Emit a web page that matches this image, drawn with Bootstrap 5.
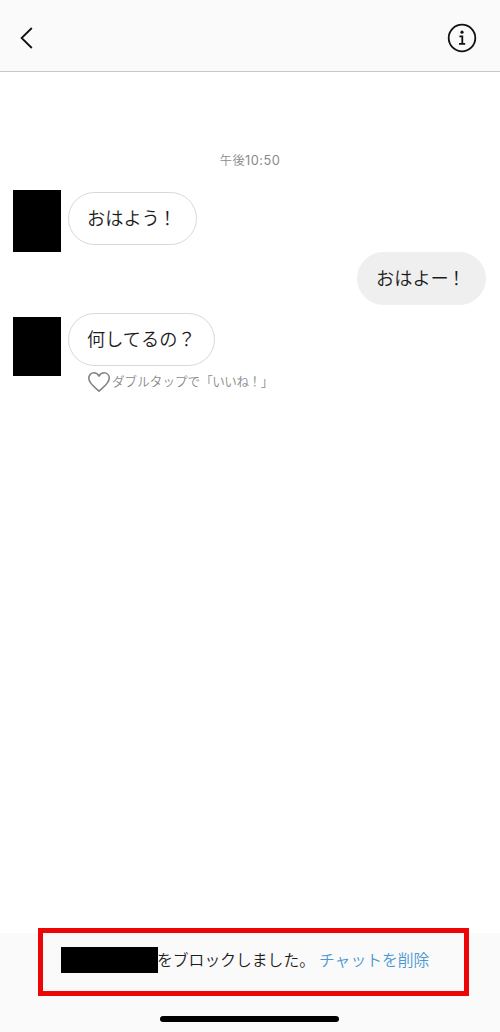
<!DOCTYPE html>
<html lang="ja">
<head>
<meta charset="utf-8">
<meta name="viewport" content="width=device-width, initial-scale=1">
<title>チャット</title>
<link rel="stylesheet" href="https://cdn.jsdelivr.net/npm/bootstrap@5.3.0/dist/css/bootstrap.min.css">
<style>
body { height: 1032px; color: #1c1c1c; overflow: hidden; font-family: "Noto Sans CJK JP", sans-serif; font-weight: 350; }
.topbar { height: 72px; background: #fafafa; border-bottom: 1px solid #c8c8c8; padding: 4px 23px 0 19px; }
.time { margin-top: 76px; height: 24px; line-height: 24px; font-size: 12.2px; color: #8a8a8a; letter-spacing: .45px; }
.time span { font-family: Inter, sans-serif; font-size: 12.8px; font-weight: 400; }
.thread { padding: 18px 14px 0 13px; }
.face { width: 48px; background: #000; margin-right: 7px; }
.face-a { height: 62px; }
.face-b { height: 59px; margin-top: 4px; }
.bubble { width: fit-content; height: 53px; line-height: 49px; padding: 0 18px; border: 1px solid #d8d8d8; border-radius: 27px; font-size: 18.2px; white-space: nowrap; }
.bubble-a { margin-top: 2px; }
.bubble-own { background: #efefef; border-color: #efefef; }
.bang { margin: 0 1.5px 0 -1.5px; }
.hint { padding-left: 19px; height: 31px; font-size: 12.6px; color: #8c8c8c; white-space: nowrap; }
.quote { letter-spacing: -.5px; }
.bottom { height: 99px; background: #fafafa; padding: 0 31px 0 38px; }
.notice { height: 68px; margin-top: -5px; border: 5px solid #ee0606; padding: 0 0 4px 18px; font-size: 15.8px; white-space: nowrap; }
.mask { width: 97px; height: 26px; background: #000; margin-right: -1px; }
.notice a { color: #4a98d2; margin-left: 4px; }
.home-line { width: 179px; height: 6px; background: #000; margin: 20px 0 0 122px; }
</style>
<script src="https://cdn.jsdelivr.net/npm/bootstrap@5.3.0/dist/js/bootstrap.bundle.min.js"></script>
</head>
<body class="d-flex flex-column bg-white">
<header class="topbar d-flex justify-content-between align-items-center flex-shrink-0">
  <svg width="16" height="24" viewBox="0 0 16 24" fill="none" stroke="#111" stroke-width="1.8"><path d="M12.8 2 2.6 12l10.2 10"/></svg>
  <svg width="30" height="30" viewBox="0 0 30 30" fill="none" stroke="#111" stroke-width="1.8"><circle cx="15" cy="15" r="13.3"/><circle cx="15" cy="9.2" r="1.6" fill="#111" stroke="none"/><path d="M12.4 13.4h2.9v7.3M12 20.9h6.2"/></svg>
</header>
<main class="flex-grow-1">
  <div class="time text-center">午後<span>10:50</span></div>
  <div class="thread d-flex flex-column">
    <div class="d-flex align-items-start"><div class="face face-a"></div><div class="bubble bubble-a">おはよう<span class="bang">！</span></div></div>
    <div class="d-flex justify-content-end"><div class="bubble bubble-own">おはよー<span class="bang">！</span></div></div>
    <div class="d-flex align-items-start mt-2">
      <div class="face face-b"></div>
      <div>
        <div class="bubble">何してるの？</div>
        <div class="hint d-flex align-items-center">
          <svg width="25" height="22" viewBox="0 0 25 22" fill="none" stroke="#858585" stroke-width="1.6" stroke-linejoin="round"><path d="M12 20.2C9.8 17.8 1.8 12.7 1.8 7.2c0-3.1 2.3-5.4 5.1-5.4 2.2 0 4 1.2 5.1 3.3 1.1-2.1 2.9-3.3 5.1-3.3 2.8 0 5.1 2.3 5.1 5.4 0 5.5-8 10.6-10.2 13z"/></svg>
          <span>ダブルタップで</span><span class="quote">「いいね！」</span>
        </div>
      </div>
    </div>
  </div>
</main>
<footer class="bottom flex-shrink-0">
  <div class="notice d-flex align-items-center"><span class="mask"></span><span>をブロックしました。</span><a href="#" class="text-decoration-none">チャットを削除</a></div>
  <div class="home-line rounded-pill"></div>
</footer>
</body>
</html>
